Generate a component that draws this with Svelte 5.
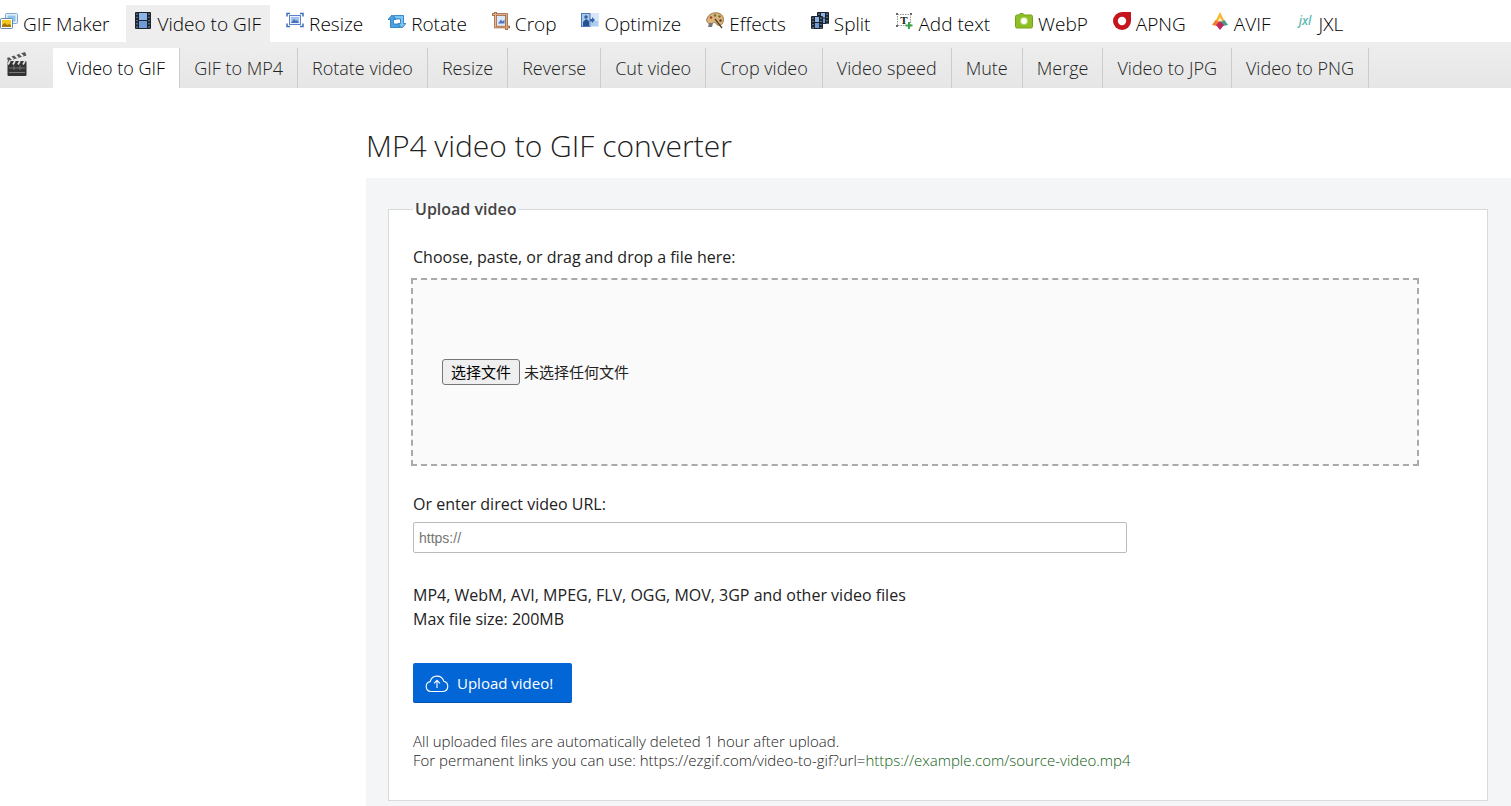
<script>
  // Main tools in the top bar
  const tools = [
    { icon: 'maker', label: 'GIF Maker' },
    { icon: 'video', label: 'Video to GIF' },
    { icon: 'resize', label: 'Resize' },
    { icon: 'rotate', label: 'Rotate' },
    { icon: 'crop', label: 'Crop' },
    { icon: 'optimize', label: 'Optimize' },
    { icon: 'effects', label: 'Effects' },
    { icon: 'split', label: 'Split' },
    { icon: 'text', label: 'Add text' },
    { icon: 'webp', label: 'WebP' },
    { icon: 'apng', label: 'APNG' },
    { icon: 'avif', label: 'AVIF' },
    { icon: 'jxl', label: 'JXL' },
  ];

  // Video tools
  const tabs = [
    'Video to GIF',
    'GIF to MP4',
    'Rotate video',
    'Resize',
    'Reverse',
    'Cut video',
    'Crop video',
    'Video speed',
    'Mute',
    'Merge',
    'Video to JPG',
    'Video to PNG',
  ];

  let activeTool = $state('Video to GIF');
  let activeTab = $state('Video to GIF');
  let url = $state('');
  let fileName = $state('');
  let fileInput;

  const select = (e, label, set) => {
    e.preventDefault();
    set(label);
  };

  const onFile = () => {
    fileName = fileInput.files[0]?.name ?? '';
  };

  const onDrop = (e) => {
    e.preventDefault();
    if (e.dataTransfer.files.length) {
      fileInput.files = e.dataTransfer.files;
      onFile();
    }
  };
</script>

{#snippet film(x, y, w, h)}
  <rect {x} {y} width={w} height={h} rx="1" fill="#1d2430" />
  <rect x={x + 4} y={y + 1} width={w - 8} height={h / 2 - 1.5} fill="#8db4e6" />
  <rect x={x + 4} y={y + h / 2 + 0.5} width={w - 8} height={h / 2 - 1.5} fill="#6d9bd8" />
  <path
    d="M{x + 2} {y + 1.5}V{y + h}M{x + w - 2} {y + 1.5}V{y + h}"
    stroke="#7d8796"
    stroke-width="1.4"
    stroke-dasharray="1.4 1.8"
  />
{/snippet}

{#snippet toolIcon(name)}
  <svg class="icon" viewBox="0 0 18 18" aria-hidden="true">
    {#if name === 'maker'}
      <rect x="5.5" y="1.5" width="12" height="10" rx="1" fill="#e4f0fa" stroke="#7fa6cc" />
      <rect x="7.5" y="3.5" width="8" height="6" fill="#8ec3e8" />
      <rect x="0.5" y="6.5" width="12" height="10" rx="1" fill="#fff" stroke="#6685a8" />
      <rect x="2" y="8" width="9" height="7" fill="#f2c91b" />
      <path d="M2 15v-2l3-2 2 2 2-1 2 1v2z" fill="#a77a08" />
    {:else if name === 'video'}
      {@render film(0, 0, 16, 17)}
    {:else if name === 'resize'}
      <rect x="3.5" y="3.5" width="11" height="9" fill="#e7f0fc" stroke="#5b83c4" />
      <rect x="5" y="5" width="8" height="6" fill="#a3c1ec" />
      <path d="M5 11l3-4 2 2 1-1 2 3z" fill="#4672bb" />
      <path d="M1 4.500V1.500h3M14 1.500h3v3M17 11.500v3h-3M4 14.500H1v-3" fill="none" stroke="#3e6db8" stroke-width="1.500" />
    {:else if name === 'rotate'}
      <path d="M4 3l4 4.500H5.500V12h5l2 3.500h-10v-8H0z" fill="#4ba3e0" stroke="#1e74b8" stroke-width="0.800" />
      <path d="M14 16l-4-4.500h2.500V7h-5l-2-3.500h10v8H18z" fill="#7cc4f2" stroke="#1e74b8" stroke-width="0.800" />
    {:else if name === 'crop'}
      <rect x="5" y="4" width="9" height="9" fill="#dbe8fa" />
      <path d="M6 11.500l3-4 1.500 2 2-2v4z" fill="#4c77c4" />
      <path d="M3.500 0v15H18" fill="none" stroke="#8a5535" stroke-width="2.600" />
      <path d="M0 2.500h14.500V18" fill="none" stroke="#8a5535" stroke-width="2.600" />
      <path d="M3.500 0.700V15h13.800" fill="none" stroke="#f0b98a" stroke-width="1.200" />
      <path d="M0.700 2.500h13.800v14.800" fill="none" stroke="#e8a878" stroke-width="1.200" />
    {:else if name === 'optimize'}
      <rect x="9" y="1" width="9" height="14" fill="#d7e6f8" />
      <path d="M10 9h7v5h-7z" fill="#b0ccec" />
      <rect x="0.500" y="1.500" width="8.500" height="13" fill="#a9c8ec" stroke="#4f78b4" />
      <path d="M2 10l3-3 3 2v5H2z" fill="#27508f" />
      <circle cx="5" cy="5" r="1.700" fill="#315fa4" />
      <path d="M9 7h2V5l3 3-3 3V9.500H9z" fill="#2f64af" />
    {:else if name === 'effects'}
      <path d="M0.500 8C2 3 5 0.800 10 0.800c4.500 0 7.500 2.700 7.500 6.700 0 3.500-2 6-5 6-2 0-2-3-4-3-2 0-1.500 1.500-4 1.500-2 0-3.500-2-4-4z" fill="#dcb57a" stroke="#8a6334" stroke-width="0.800" />
      <circle cx="5" cy="5.500" r="1.300" fill="#a64332" />
      <circle cx="9" cy="3.500" r="1.200" fill="#4d7c3c" />
      <circle cx="13.500" cy="4.500" r="1.200" fill="#8a6334" />
      <circle cx="14.500" cy="8.500" r="1.200" fill="#5c3b25" />
      <path d="M9 7l7 9" stroke="#59422b" stroke-width="1.400" />
      <path d="M2 15l1-4 4 0-1 4z" fill="#777" />
    {:else if name === 'split'}
      {@render film(6, 0, 12, 12)}
      {@render film(0, 4, 12, 13)}
    {:else if name === 'text'}
      <rect x="2.500" y="2.500" width="13" height="11" fill="none" stroke="#999" stroke-dasharray="1.500 1" />
      <path d="M1 1h2v2H1zM15 1h2v2h-2zM1 13h2v2H1z" fill="#666" />
      <text x="9" y="12" text-anchor="middle" class="icon-t">T</text>
      <path d="M14 10v7M10.500 13.500h7" stroke="#3da445" stroke-width="2" />
    {:else if name === 'webp'}
      <path d="M2 3h2l1-1.500h3L9 3h7q1.500 0 1.500 1.500v10q0 1.500-1.500 1.500H2Q0.500 16 0.500 14.500v-10Q0.500 3 2 3z" fill="#8fbf26" stroke="#76a315" />
      <circle cx="9" cy="9" r="4" fill="#b5d66a" />
      <circle cx="9" cy="9" r="3" fill="#fff" />
    {:else if name === 'apng'}
      <path d="M9 0h9v9a9 9 0 1 1-9-9z" fill="#c4161c" />
      <circle cx="9" cy="9" r="4.200" fill="#fff" />
    {:else if name === 'avif'}
      <path d="M9 0l4.500 9h-9z" fill="#f8b62d" />
      <path d="M4.500 8L9 10l-3 4-5-1z" fill="#f07c2c" />
      <path d="M13.500 8L9 10l3 4 5-1z" fill="#4c9a8c" />
      <path d="M9 9l4 4-4 5-4-5z" fill="#c2255c" />
      <path d="M9 5l2 4H7z" fill="#fff0c0" />
    {:else if name === 'jxl'}
      <text x="9" y="13" text-anchor="middle" class="icon-jxl">jxl</text>
    {/if}
  </svg>
{/snippet}

<nav class="tools" aria-label="Tools">
  {#each tools as { icon, label }}
    <a href="#{icon}" class:active={label === activeTool} onclick={(e) => select(e, label, (v) => (activeTool = v))}>
      {@render toolIcon(icon)}
      {label}
    </a>
  {/each}
</nav>

<nav class="tabs" aria-label="Video tools">
  <svg class="clapper" viewBox="0 0 22 26" aria-hidden="true">
    <path d="M1 7L19 1l1.500 3.500L2 10z" fill="#555" />
    <path d="M4 5.500l3 3M9 4l3 3M14 2.500l3 3" stroke="#eee" stroke-width="2" />
    <rect x="1.500" y="10" width="19" height="15" rx="1" fill="#333" />
    <path d="M4 10l-2 3.500M9 10l-2 3.500M14 10l-2 3.500M19 10l-2 3.500" stroke="#ddd" stroke-width="1.800" />
    <path d="M3 17h16M8 14.500V19M14 14.500V19M3 21.500h16" stroke="#777" />
  </svg>
  {#each tabs as tab}
    <a href="#{tab}" class:active={tab === activeTab} onclick={(e) => select(e, tab, (v) => (activeTab = v))}>{tab}</a>
  {/each}
</nav>

<div class="page">
  <main>
    <h1>MP4 video to GIF converter</h1>
    <form class="panel" onsubmit={(e) => e.preventDefault()}>
      <fieldset>
        <legend>Upload video</legend>
        <label for="new-image">Choose, paste, or drag and drop a file here:</label>
        <div class="drop" role="group" aria-label="File" ondragover={(e) => e.preventDefault()} ondrop={onDrop}>
          <input class="hidden" id="new-image" type="file" accept="video/*" tabindex="-1" bind:this={fileInput} onchange={onFile} />
          <button type="button" class="choose" onclick={() => fileInput.click()}>选择文件</button>
          <span>{fileName || '未选择任何文件'}</span>
        </div>

        <label for="new-image-url">Or enter direct video URL:</label>
        <input class="url" id="new-image-url" type="text" placeholder="https://" bind:value={url} />

        <p class="formats">
          MP4, WebM, AVI, MPEG, FLV, OGG, MOV, 3GP and other video files<br />
          Max file size: 200MB
        </p>

        <button type="submit" class="upload">
          <svg viewBox="0 0 24 20" aria-hidden="true">
            <path d="M6 18.500a5 5 0 0 1-0.800-9.900A7 7 0 0 1 18.800 8.300 5.200 5.200 0 0 1 18.300 18.500z" />
            <path d="M12 15V7.500M9 10.300l3-3 3 3" />
          </svg>
          Upload video!
        </button>

        <p class="note">
          All uploaded files are automatically deleted 1 hour after upload.<br />
          For permanent links you can use: https://ezgif.com/video-to-gif?url=<span class="green">https://example.com/source-video.mp4</span>
        </p>
      </fieldset>
    </form>
  </main>
</div>

<style>
  :global(body) {
    margin: 0;
    background: #fff;
    color: #222;
    font-family: 'Open Sans', 'Noto Sans', 'Noto Sans CJK SC', sans-serif;
    font-size: 16px;
    line-height: 24px;
    overflow-x: hidden;
  }

  a {
    color: inherit;
    text-decoration: none;
    white-space: nowrap;
  }

  .tools {
    display: flex;
    gap: 7px;
    margin-left: -9px;
    padding-top: 5px;
    font-size: 19px;
    font-weight: 300;
    line-height: 39px;
    color: #000;
  }

  .tools a {
    display: flex;
    gap: 5px;
    height: 37px;
    padding: 0 9px;
  }

  .tools a.active,
  .tools a:hover {
    background: #eee;
  }

  .icon {
    width: 18px;
    height: 18px;
    margin-top: 7px;
  }

  .icon-t {
    font: bold 11px 'Liberation Serif', serif;
    fill: #222;
  }

  .icon-jxl {
    font: italic 600 12px 'Open Sans', sans-serif;
    fill: #5fb8b4;
  }

  .tabs {
    display: flex;
    align-items: flex-end;
    height: 46px;
    background: linear-gradient(#eee, #e6e6e6);
    font-size: 18px;
    font-weight: 300;
    line-height: 41px;
    color: #222;
  }

  .clapper {
    width: 22px;
    height: 26px;
    margin: 0 25px 11px 6px;
  }

  .tabs a {
    height: 40px;
    padding: 0 14px;
    border-right: 1px solid #ccc;
  }

  .tabs a.active {
    background: #fff;
    color: #000;
  }

  .page {
    display: grid;
    grid-template-columns: 366px 1fr;
  }

  main {
    grid-column: 2;
  }

  h1 {
    margin: 38px 0 12px;
    font-size: 30px;
    font-weight: 300;
    line-height: 40px;
    color: #222;
  }

  .panel {
    padding: 19px 23px 24px 22px;
    background: #f4f5f7;
  }

  fieldset {
    margin: 0;
    padding: 24px 24px 30px;
    border: 1px solid #d8dadc;
    background: #fff;
  }

  legend {
    padding: 0 2px;
    font-weight: 600;
    color: #444;
  }

  label {
    display: block;
  }

  .drop {
    display: flex;
    align-items: center;
    gap: 4px;
    box-sizing: border-box;
    width: 96%;
    height: 188px;
    margin: 9px 0 26px -2px;
    padding: 0 29px;
    border: 2px dashed #aaa;
    background: #fafafa;
    font-family: 'Noto Sans CJK SC', sans-serif;
    font-size: 15px;
  }

  .hidden {
    position: absolute;
    width: 1px;
    height: 1px;
    opacity: 0;
  }

  .choose {
    height: 26px;
    padding: 0 8px;
    border: 1px solid #767676;
    border-radius: 3px;
    background: #efefef;
    color: #000;
    font: inherit;
    line-height: 22px;
  }

  .url {
    display: block;
    box-sizing: border-box;
    width: 68%;
    height: 31px;
    margin-top: 6px;
    padding: 0 5px;
    border: 1px solid #bbb;
    border-radius: 2px;
    font: 14px 'Liberation Sans', Arial, sans-serif;
  }

  .url::placeholder {
    color: #757575;
  }

  .formats {
    margin: 30px 0 32px;
  }

  .upload {
    display: flex;
    align-items: center;
    gap: 8px;
    height: 40px;
    padding: 0 19px 0 12px;
    border: 0;
    border-bottom: 1px solid #0650a8;
    border-radius: 2px;
    background: #0366d6;
    color: #fff;
    font: inherit;
    font-size: 15px;
    font-weight: 500;
  }

  .upload svg {
    width: 24px;
    height: 20px;
    fill: none;
    stroke: #fff;
    stroke-width: 1.1;
  }

  .note {
    margin: 29px 0 0;
    font-size: 15px;
    font-weight: 300;
    line-height: 19px;
    color: #222;
  }

  .green {
    color: #0f6014;
  }
</style>
